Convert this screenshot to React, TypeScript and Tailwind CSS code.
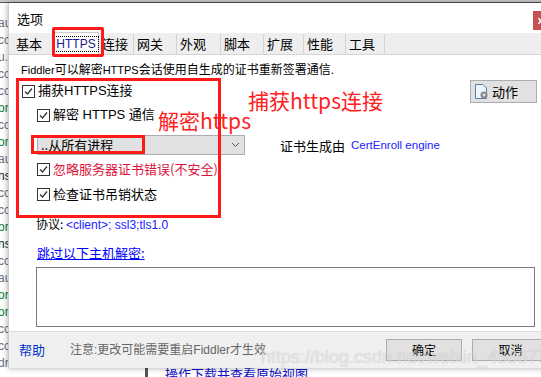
import React from "react";

const font = { fontFamily: '"Liberation Sans", "Noto Sans CJK SC", sans-serif' };
const cjk = { fontFamily: '"Noto Sans CJK SC", sans-serif' };

const sideRows = [
  { t: "au", c: "text-gray-500" },
  { t: "cc", c: "text-gray-500" },
  { t: "u.c", c: "text-gray-500" },
  { t: "cc", c: "text-gray-500" },
  { t: "cc", c: "text-gray-500" },
  { t: "or", c: "text-green-700" },
  { t: "cc", c: "text-gray-500" },
  { t: "or", c: "text-green-700" },
  { t: "au", c: "text-gray-500" },
  { t: "ns", c: "text-gray-900" },
  { t: "cc", c: "text-gray-500" },
  { t: "cc", c: "text-gray-500" },
  { t: "or", c: "text-green-700" },
  { t: "ns", c: "text-gray-900" },
  { t: "cc", c: "text-gray-500" },
  { t: "au", c: "text-gray-500" },
  { t: "or", c: "text-green-700" },
  { t: "or", c: "text-green-700" },
  { t: "cc", c: "text-gray-500" },
  { t: "cc", c: "text-gray-500" },
  { t: "dr", c: "text-gray-500" },
  { t: "ns", c: "text-gray-900" },
];

const tabs = ["基本", "HTTPS", "连接", "网关", "外观", "脚本", "扩展", "性能", "工具"];
const tabW = [40, 46, 35, 43, 44, 43, 40, 42, 39];

function Check() {
  return (
    <span className="inline-flex h-[13px] w-[13px] items-center justify-center border border-[#333] bg-white">
      <svg width="11" height="11" viewBox="0 0 11 11">
        <path d="M2 5.5 L4.5 8 L9 2.5" fill="none" stroke="#333" strokeWidth="1.3" />
      </svg>
    </span>
  );
}

export default function App() {
  return (
    <div className="relative h-[377px] w-[541px] overflow-hidden bg-white text-[12px]" style={font}>
      {/* background app */}
      <div className="h-[3px] border-b border-[#555] bg-[#c8c8c8]" />
      <div className="flex flex-col pt-[12px] leading-[17px]">
        {sideRows.map((r, i) => (
          <span key={i} className={`-ml-[2px] text-[12px] ${r.c}`}>{r.t}</span>
        ))}
      </div>
      <div className="absolute bottom-0 left-[145px] h-[9px] w-[3px] bg-[#555]" />
      <div className="absolute bottom-[-6px] left-[165px] text-[13px] text-[#1010c8]" style={cjk}>操作下载并查看原始视图...</div>

      {/* dialog */}
      <div className="absolute left-[8px] top-[3px] flex h-[365px] w-[540px] flex-col border-l border-[#ccc] bg-white shadow-[0_0_6px_rgba(0,0,0,0.35)]">
        <div className="flex h-[30px] items-start justify-between">
          <span className="pt-[6px] pl-[8px] text-[13px] text-black" style={cjk}>选项</span>
          <span className="mt-[8px] flex h-[19px] w-[15px] items-center justify-center bg-[#c75050] text-[10px] font-bold text-white">x</span>
        </div>
        {/* tabs */}
        <div className="flex h-[22px] items-end border-b border-[#d4d4d4] bg-[#eeeeee] pl-[4px]">
          {tabs.map((t, i) => (
            <div
              key={t}
              style={{ width: tabW[i], ...(i === 1 ? {} : cjk) }}
              className={
                i === 1
                  ? "flex h-[22px] items-center justify-center border border-b-0 border-[#ccc] bg-white"
                  : "flex h-[20px] items-center border-r border-[#d4d4d4] pl-[3px] text-[13px] text-black"
              }
            >
              {i === 1 ? (
                <span className="border border-dotted border-black px-[2px] leading-[14px] text-[#1a1a8c]">{t}</span>
              ) : (
                t
              )}
            </div>
          ))}
        </div>

        {/* content */}
        <div className="relative flex flex-1 flex-col pl-[12px] pr-[5px]">
          <div className="pt-[7px] text-[12px] leading-[16px] text-black">
            <span className="text-[11px]">Fiddler</span>可以解密<span className="text-[11px]">HTTPS</span>会话使用自生成的证书重新签署通信.
          </div>

          <div className="mt-[2px] flex items-start">
            <div className="flex flex-col">
              <label className="flex items-center gap-[3px] pl-[1px] pt-[3px] leading-[16px]">
                <Check />
                <span className="text-[13px]">捕获HTTPS连接</span>
              </label>
              <label className="mt-[8px] flex items-center gap-[3px] pl-[16px] leading-[16px]">
                <Check />
                <span className="text-[13px]">解密 HTTPS 通信</span>
              </label>
              <div className="mt-[12px] ml-[16px] flex h-[20px] w-[208px] items-center justify-between border border-[#adadad] bg-[#e1e1e1] pl-[3px] pr-[4px]">
                <span className="text-[13px]" style={cjk}>..从所有进程</span>
                <svg width="9" height="6" viewBox="0 0 9 6">
                  <path d="M1 1 L4.5 4.5 L8 1" fill="none" stroke="#555" strokeWidth="1" />
                </svg>
              </div>
              <label className="mt-[6px] flex items-center gap-[3px] pl-[16px] leading-[16px]">
                <Check />
                <span className="text-[13px] text-[#dc143c]" style={cjk}>忽略服务器证书错误(不安全)</span>
              </label>
              <label className="mt-[9px] flex items-center gap-[3px] pl-[16px] leading-[16px]">
                <Check />
                <span className="text-[13px]" style={cjk}>检查证书吊销状态</span>
              </label>
            </div>
            <div className="ml-[35px] mt-[56px] flex items-center gap-[6px]">
              <span className="text-[13px]" style={cjk}>证书生成由</span>
              <span className="text-[11.5px] text-[#2020ff]">CertEnroll engine</span>
            </div>
            <div className="ml-auto mr-[6px] flex h-[23px] w-[67px] items-center gap-[2px] border border-[#adadad] bg-[#e1e1e1] pl-[3px]">
              <svg width="16" height="17" viewBox="0 0 16 17">
                <path d="M1.5 1.5 H9 L12.5 5 V15.5 H1.5 Z" fill="#eef4fb" stroke="#5b7fa8" />
                <circle cx="10" cy="12" r="3.5" fill="#888" />
                <circle cx="10" cy="12" r="1.4" fill="#e1e1e1" />
              </svg>
              <span className="text-[13px]" style={cjk}>动作</span>
            </div>
          </div>

          <div className="mt-[14px] pl-[15px] text-[12px] leading-[16px]">
            <span style={cjk}>协议: </span>
            <span className="text-[#2020ff]">&lt;client&gt;; ssl3;tls1.0</span>
          </div>
          <div className="mt-[12px] pl-[16px] text-[12px] leading-[16px]">
            <span className="text-[13px] text-[#0000ff] underline" style={cjk}>跳过以下主机解密:</span>
          </div>
          <div className="mt-[5px] ml-[15px] h-[60px] w-[499px] border border-[#7a7a7a] bg-white" />

          {/* annotations */}
          <div className="pointer-events-none absolute left-[7px] top-[23px] h-[140px] w-[205px] border-[3px] border-[#ff1a1a]" />
          <div className="pointer-events-none absolute left-[22px] top-[80px] h-[19px] w-[114px] border-[3px] border-[#ff1a1a]" />
          <div className="pointer-events-none absolute left-[149px] top-[52px] text-[21px] leading-[26px] text-[#ff2020]" style={cjk}>
            解密https
          </div>
          <div className="pointer-events-none absolute left-[239px] top-[32px] text-[21px] leading-[26px] text-[#ff2020]" style={cjk}>
            捕获https连接
          </div>
        </div>

        {/* footer */}
        <div className="relative flex h-[37px] items-center border-t border-[#dcdcdc] bg-[#f0f0f0] pl-[10px]">
          <span className="text-[13px] text-[#0033cc]" style={cjk}>帮助</span>
          <span className="ml-[25px] text-[12px] text-[#666]">注意:更改可能需要重启Fiddler才生效</span>
          <div className="ml-auto flex gap-[10px]">
            <button className="h-[22px] w-[76px] border border-[#adadad] bg-[#e1e1e1] text-[12px]" style={cjk}>确定</button>
            <button className="h-[22px] w-[76px] border border-r-0 border-[#adadad] bg-[#e1e1e1] text-[12px]" style={cjk}>取消</button>
          </div>
          <span className="pointer-events-none absolute left-[252px] top-[12px] text-[18px] text-white/60" style={{ fontFamily: '"Liberation Sans", sans-serif', textShadow: "0 0 1px rgba(0,0,0,0.25)" }}>
            https://blog.csdn.net/weixin_45867718
          </span>
        </div>
      </div>

      {/* tab annotation */}
      <div className="pointer-events-none absolute left-[52px] top-[27px] h-[30px] w-[52px] rounded-[2px] border-[3px] border-[#ff1a1a]" />
    </div>
  );
}
